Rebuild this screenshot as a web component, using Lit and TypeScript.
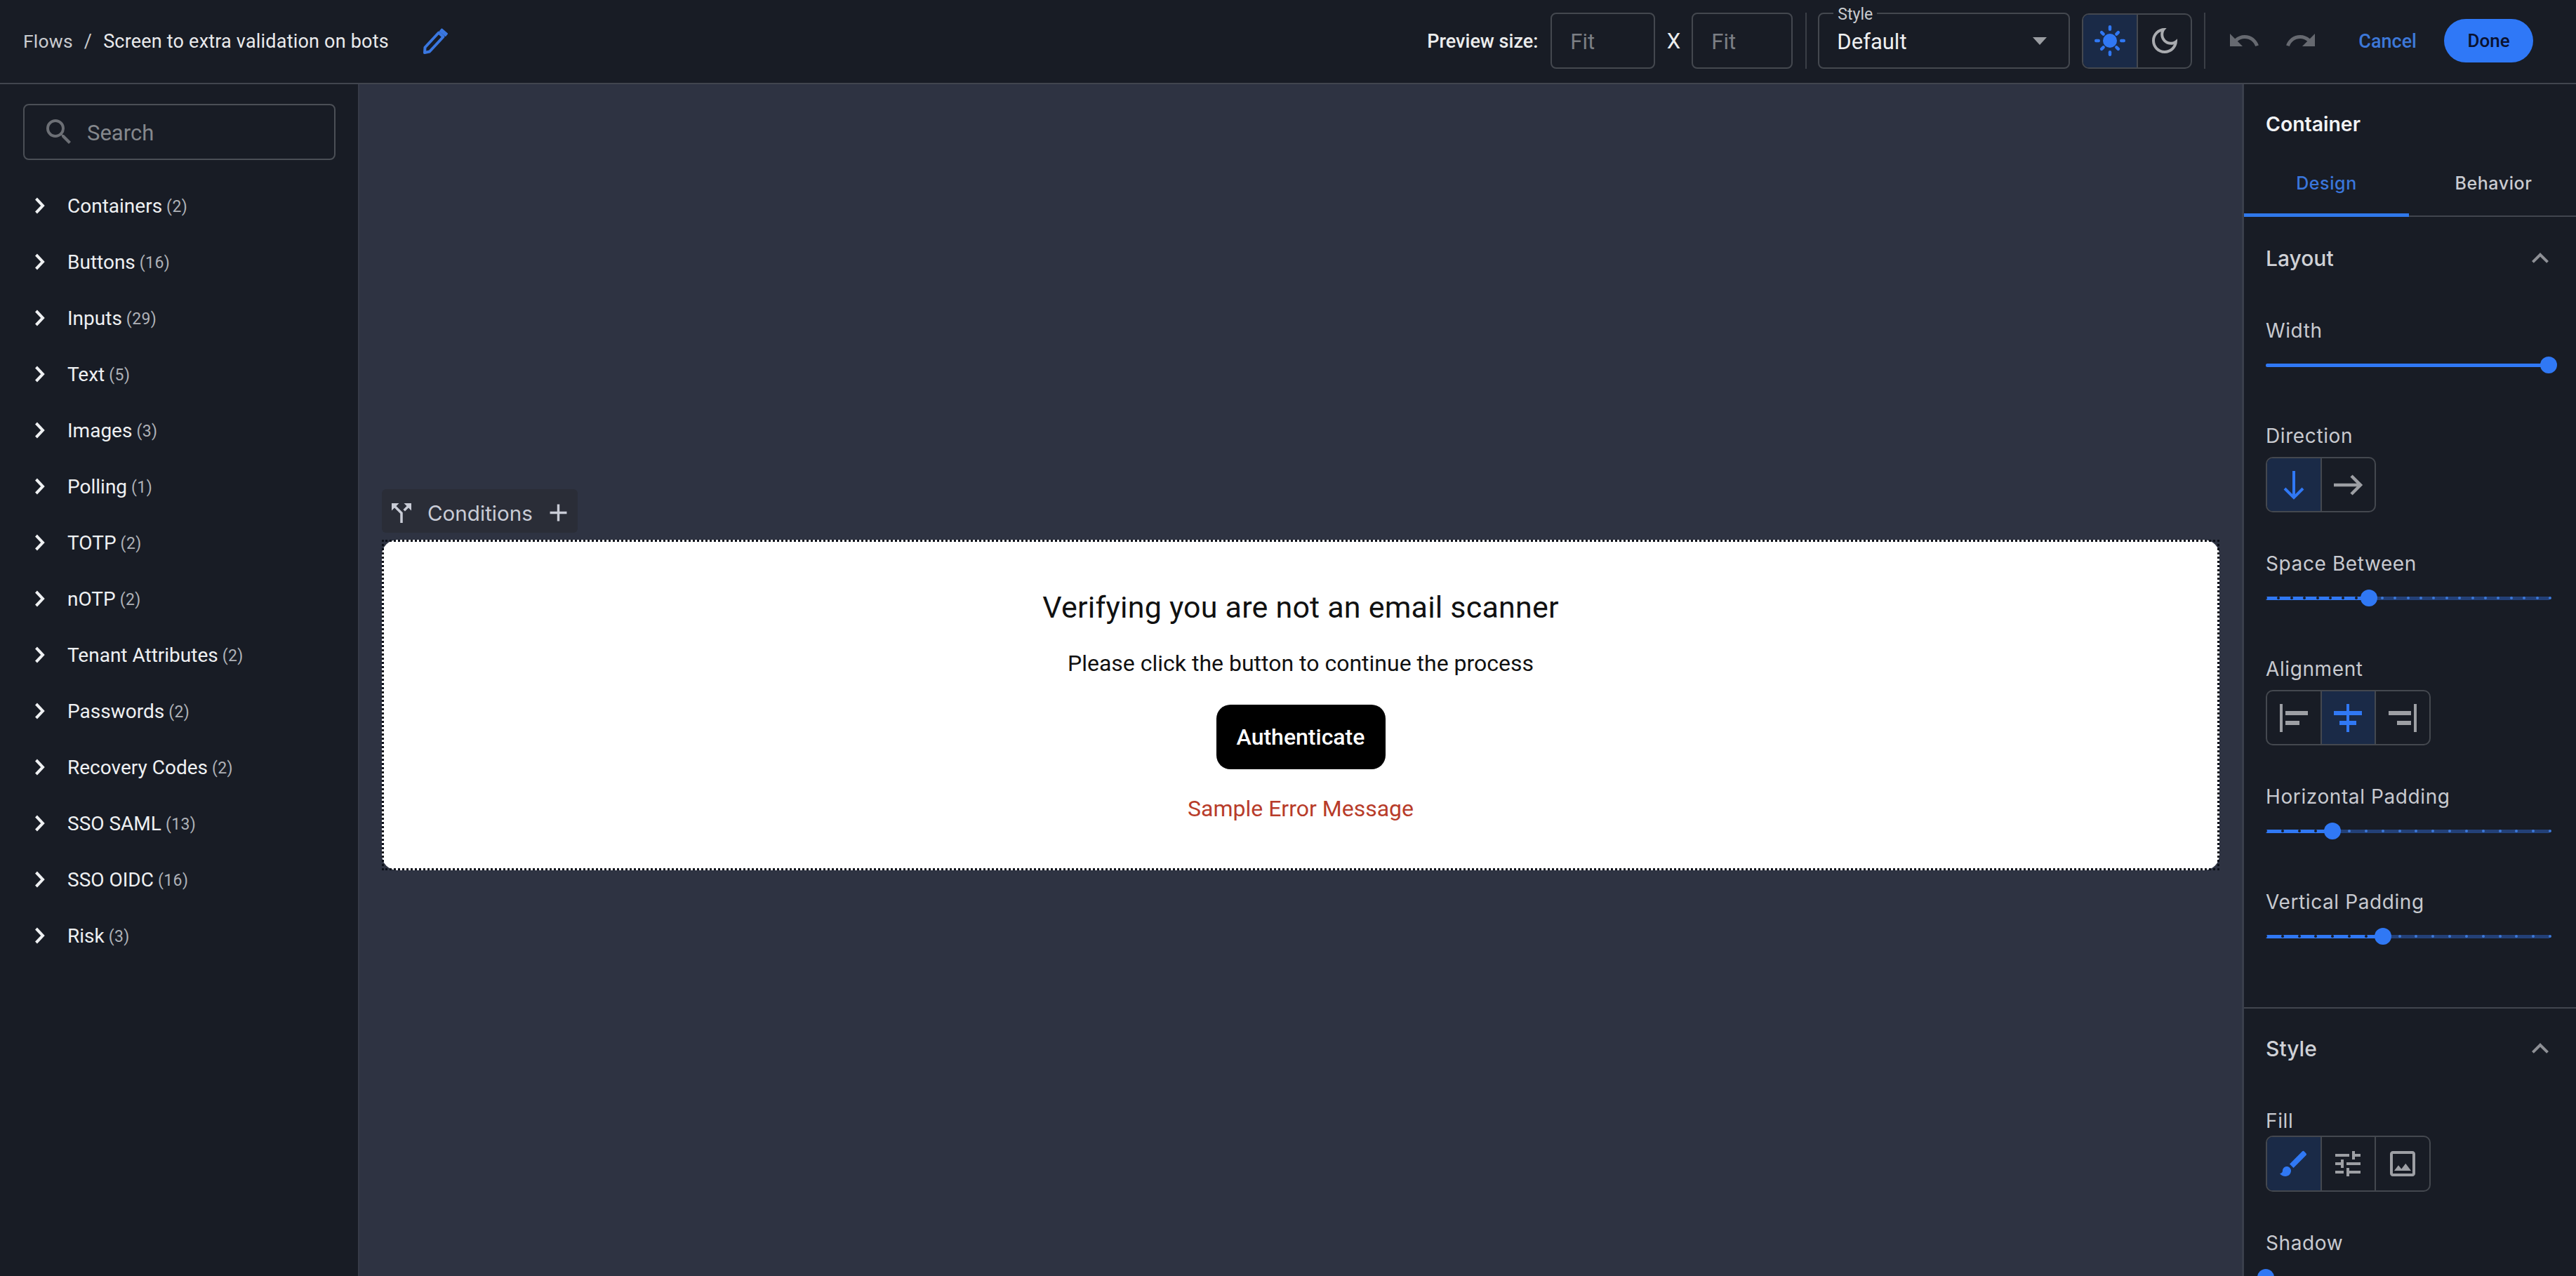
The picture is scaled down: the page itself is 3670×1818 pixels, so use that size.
import { LitElement, html, css, svg } from "lit";
import { customElement } from "lit/decorators.js";

const ICONS: Record<string, string> = {
  search: "M15.5 14h-.79l-.28-.27A6.47 6.47 0 0 0 16 9.5 6.5 6.5 0 1 0 9.5 16c1.61 0 3.09-.59 4.23-1.57l.27.28v.79l5 4.99L20.49 19l-4.99-5zm-6 0C7.01 14 5 11.99 5 9.5S7.01 5 9.5 5 14 7.01 14 9.5 11.99 14 9.5 14z",
  moon: "M9.37 5.51C9.19 6.15 9.1 6.82 9.1 7.5c0 4.08 3.32 7.4 7.4 7.4.68 0 1.35-.09 1.99-.27C17.45 17.19 14.93 19 12 19c-3.86 0-7-3.14-7-7 0-2.93 1.81-5.45 4.37-6.49zM12 3c-4.97 0-9 4.03-9 9s4.03 9 9 9 9-4.03 9-9c0-.46-.04-.92-.1-1.36-.98 1.37-2.58 2.26-4.4 2.26-2.98 0-5.4-2.42-5.4-5.4 0-1.81.89-3.42 2.26-4.4-.44-.06-.9-.1-1.36-.1z",
  undo: "M12.5 8c-2.65 0-5.05.99-6.9 2.6L2 7v9h9l-3.62-3.62c1.39-1.16 3.16-1.88 5.12-1.88 3.54 0 6.55 2.31 7.6 5.5l2.37-.78C21.08 11.03 17.15 8 12.5 8z",
  redo: "M18.4 10.6C16.55 8.99 14.15 8 11.5 8c-4.65 0-8.58 3.03-9.96 7.22L3.9 16c1.05-3.19 4.05-5.5 7.6-5.5 1.95 0 3.73.72 5.12 1.88L13 16h9V7l-3.6 3.6z",
  brush: "M7 14c-1.66 0-3 1.34-3 3 0 1.31-1.16 2-2 2 .92 1.22 2.49 2 4 2 2.21 0 4-1.79 4-4 0-1.66-1.34-3-3-3zm13.71-9.37l-1.34-1.34a.996.996 0 0 0-1.41 0L9 12.25 11.75 15l8.96-8.96a.996.996 0 0 0 0-1.41z",
  tune: "M3 17v2h6v-2H3zM3 5v2h10V5H3zm10 16v-2h8v-2h-8v-2h-2v6h2zM7 9v2H3v2h4v2h2V9H7zm14 4v-2H11v2h10zm-6-4h2V7h4V5h-4V3h-2v6z",
  image: "M19 5v14H5V5h14m0-2H5c-1.1 0-2 .9-2 2v14c0 1.1.9 2 2 2h14c1.1 0 2-.9 2-2V5c0-1.1-.9-2-2-2zm-4.86 8.86l-3 3.87L9 13.14 6 17h12l-3.86-5.14z",
  less: "M12 8l-6 6 1.41 1.41L12 10.83l4.59 4.58L18 14z",
  split: "M14 4l2.29 2.29-2.88 2.88 1.42 1.42 2.88-2.88L20 10V4zm-4 0H4v6l2.29-2.29 4.71 4.7V20h2v-8.41l-5.29-5.3z",
  add: "M19 13h-6v6h-2v-6H5v-2h6V5h2v6h6v2z",
};

const icon = (name: string, cls = "") =>
  html`<svg class="ic ${cls}" viewBox="0 0 24 24" fill="currentColor"><path d="${ICONS[name]}"></path></svg>`;

const sun = html`<svg class="ic48" viewBox="0 0 48 48" fill="currentColor">
  <circle cx="24" cy="24" r="10"></circle>
  ${[0, 45, 90, 135, 180, 225, 270, 315].map(
    (a) => svg`<rect x="21.8" y="${a % 90 === 0 ? 2 : 5}" width="4.4" height="8" rx="2.2" transform="rotate(${a} 24 24)"></rect>`
  )}
</svg>`;

const arrowDown = html`<svg class="ic48" viewBox="0 0 48 48" fill="none" stroke="currentColor" stroke-width="4"><path d="M24 4V42M11 29L24 42L37 29"></path></svg>`;
const arrowRight = html`<svg class="ic48" viewBox="0 0 48 48" fill="none" stroke="currentColor" stroke-width="4.5"><path d="M4 24H42M29 11L42 24L29 37"></path></svg>`;
const alignLeft = html`<svg class="ic48" viewBox="0 0 48 48" fill="currentColor"><path d="M4 4h4v40H4zM12 14h32v6H12zM12 28h20v6H12z"></path></svg>`;
const alignCenter = html`<svg class="ic48" viewBox="0 0 48 48" fill="currentColor"><path d="M22 4h4v10h18v6H26v8h10v6H26v10h-4V34H12v-6h10v-8H4v-6h18z"></path></svg>`;
const alignRight = html`<svg class="ic48" viewBox="0 0 48 48" fill="currentColor"><path d="M40 4h4v40h-4zM4 14h32v6H4zM16 28h20v6H16z"></path></svg>`;

const ITEMS: [string, number][] = [
  ["Containers", 2], ["Buttons", 16], ["Inputs", 29], ["Text", 5], ["Images", 3],
  ["Polling", 1], ["TOTP", 2], ["nOTP", 2], ["Tenant Attributes", 2], ["Passwords", 2],
  ["Recovery Codes", 2], ["SSO SAML", 13], ["SSO OIDC", 16], ["Risk", 3],
];

@customElement("app-root")
export class AppRoot extends LitElement {
  static styles = css`
    :host { display: block; width: 3670px; height: 1818px; overflow: hidden; background: #181c25; font-family: "Inter", sans-serif; }
    * { box-sizing: border-box; }
    .ic { width: 48px; height: 48px; display: block; flex: none; }
    .ic48 { width: 48px; height: 48px; display: block; flex: none; }

    .top { height: 120px; border-bottom: 2px solid #41454e; display: flex; align-items: center; justify-content: space-between; padding: 0 61px 2px 33px; }
    .crumbs { display: flex; align-items: center; font: 400 27px/40px "Roboto", sans-serif; color: #e9eaec; letter-spacing: .2px; }
    .crumbs span { padding-top: 2px; }
    .crumbs .flows { color: #c9cbcf; font-size: 26.5px; }
    .crumbs .sep { margin: 0 16px 0 16px; color: #c9cbcf; }
    .crumbs .pen { width: 40px; height: 40px; margin-left: 47px; color: #3a77e0; display: block; }

    .tools { display: flex; align-items: center; }
    .psize { font: 500 27px/40px "Roboto", sans-serif; color: #eceded; margin-right: 18px; padding-top: 2px; }
    .fit { height: 80px; border: 2px solid #44484f; border-radius: 8px; display: flex; align-items: center; padding: 3px 0 0 26px; font: 400 31px/40px "Roboto", sans-serif; color: #7b7e84; }
    .fit.a { width: 149px; }
    .fit.b { width: 144px; }
    .x { font: 400 31px/40px "Roboto", sans-serif; color: #eceded; margin: 0 15px; width: 22px; text-align: center; padding-top: 2px; }
    .vr { width: 2px; height: 80px; background: #3a3e46; flex: none; }
    .vr.m1 { margin: 0 16px 0 18px; }
    .vr.m2 { margin: 0 31px 0 17px; }
    .select { position: relative; width: 359px; height: 80px; border: 2px solid #44484f; border-radius: 8px; margin-right: 17px; display: flex; align-items: center; justify-content: space-between; padding: 3px 31px 0 25px; font: 400 31px/40px "Roboto", sans-serif; color: #eff0f1; }
    .legend { position: absolute; left: 20px; top: -11px; padding: 0 6px; background: #181c25; font: 400 23px/24px "Roboto", sans-serif; color: #c9cbcf; }
    .caret { width: 0; height: 0; border-left: 10px solid transparent; border-right: 10px solid transparent; border-top: 11px solid #9a9da2; margin-top: -3px; }

    .group { display: inline-flex; border: 2px solid #44484f; border-radius: 10px; overflow: hidden; vertical-align: top; }
    .cell { width: 75.5px; height: 75px; display: flex; align-items: center; justify-content: center; color: #9d9fa4; flex: none; }
    .cell + .cell { width: 77.5px; border-left: 2px solid #44484f; }
    .cell.on { background: #1a2a47; color: #3078f4; }
    .group.big .cell { height: 76px; }
    .group.theme .cell + .cell .ic { color: #a9abaf; }

    .undo { color: #666970; }
    .undo + .undo { margin-left: 33px; }
    .cancel { font: 500 27px/40px "Roboto", sans-serif; color: #3d78d8; margin: 0 39px 0 58px; padding-top: 2px; }
    .done { width: 127px; height: 62px; border-radius: 31px; background: #2f78f7; color: #0a1230; font: 500 26px/62px "Roboto", sans-serif; text-align: center; }

    .body { display: flex; height: 1698px; }
    .side { width: 510px; flex: none; padding: 28px 33px 0; }
    .search { width: 445px; height: 80px; border: 2px solid #4b4f56; border-radius: 8px; display: flex; align-items: center; padding-left: 25px; color: #6c6f75; }
    .search span { font: 400 31px/40px "Roboto", sans-serif; color: #85888d; margin-left: 16px; padding-top: 3px; }
    .list { margin-top: 25px; }
    .row { height: 80px; display: flex; align-items: center; color: #eef0f2; }
    .chev { width: 16px; height: 24px; margin-left: 16px; margin-right: 31px; flex: none; display: block; }
    .row b { font: 400 28px/40px "Roboto", sans-serif; padding-top: 2px; }
    .row i { font: 400 23px/40px "Roboto", sans-serif; color: #aeb1b7; margin-left: 6px; letter-spacing: .4px; padding-top: 3px; }

    .canvas { flex: 1; background: #2e3342; border-left: 2px solid #363a48; padding: 577px 32px 0 32px; min-width: 0; }
    .chip { display: inline-flex; align-items: center; height: 62px; padding: 5px 7px 0; background: #2a2d37; border-radius: 6px; color: #c9ccd6; font: 400 29.6px/40px "Inter", sans-serif; vertical-align: top; }
    .chip .ic.split { width: 42px; height: 42px; margin-right: 16px; }
    .chip .ic.add { width: 41px; height: 41px; margin-left: 16px; }
    .chip-wrap { height: 72px; }
    .card { position: relative; height: 471px; background: #fff; border-radius: 22px; display: flex; flex-direction: column; align-items: center; color: #111; }
    .card::after { content: ""; position: absolute; inset: 0; border: 3px dotted #0c0f18; pointer-events: none; }
    .card h1 { margin: 72px 0 0; font: 400 43px/48px "Roboto", sans-serif; letter-spacing: .2px; }
    .card p { margin: 36px 0 0; font: 400 32px/40px "Roboto", sans-serif; }
    .btn { margin-top: 39px; width: 241px; height: 92px; border-radius: 20px; background: #000; color: #fff; font: 500 32px/92px "Roboto", sans-serif; text-align: center; }
    .err { margin-top: 36px; font: 400 32px/40px "Roboto", sans-serif; color: #b83c2a; }

    .panel { width: 476px; flex: none; border-left: 3px solid #3a3f4c; overflow: hidden; height: 1698px; }
    .ptitle { padding: 37px 0 18px 31px; font: 600 28.4px/40px "Inter", sans-serif; color: #f2f3f5; }
    .tabs { display: flex; height: 94px; border-bottom: 2px solid #41454e; }
    .tab { position: relative; flex: 1; display: flex; align-items: center; justify-content: center; font: 500 25px/40px "Inter", sans-serif; color: #c9cbd0; letter-spacing: .6px; }
    .tab + .tab { padding-left: 3px; }
    .tab.on { color: #3a76dc; }
    .tab.on::after { content: ""; position: absolute; left: 0; right: 0; bottom: -2px; height: 5px; background: #3078ea; }
    .sec { padding: 0 0 18px 31px; border-bottom: 2px solid #41454e; }
    .sec.last { border-bottom: 0; }
    .shead { height: 120px; margin-bottom: 24px; display: flex; align-items: center; justify-content: space-between; padding: 0 27px 2px 0; font: 500 30px/40px "Inter", sans-serif; color: #cfd1d6; }
    .shead .ic { color: #8e9096; }
    .shead.b { height: 116px; margin-bottom: 26px; }
    .label { font: 400 28px/36px "Inter", sans-serif; color: #c8cad0; letter-spacing: .6px; }
    .f-slider { height: 150px; }
    .f-toggle { height: 182px; }
    .f-toggle .group { margin-top: 12px; }
    .f-toggle.tight { height: 174px; }
    .f-toggle.tight .group { margin-top: 3px; }
    .slider { position: relative; width: 405px; height: 36px; margin-top: 13px; }
    .track { position: absolute; left: 0; right: 0; top: 15.5px; height: 5px; border-radius: 3px; background: #234077; }
    .fill { position: absolute; left: 0; top: 15.5px; height: 5px; border-radius: 3px; background: #3078f4; }
    .mark { position: absolute; top: 16px; width: 4px; height: 4px; margin-left: -2px; border-radius: 50%; background: #3c78d8; }
    .mark.in { background: #181c25; }
    .thumb { position: absolute; top: 6px; width: 24px; height: 24px; margin-left: -12px; border-radius: 50%; background: #3078f4; }
  `;

  private slider(value: number, steps: number) {
    const marks = [];
    for (let i = 0; i <= steps; i++) {
      if (steps) marks.push(html`<span class="mark ${i / steps < value ? "in" : ""}" style="left:${(i / steps) * 100}%"></span>`);
    }
    return html`<div class="slider">
      <div class="track"></div>
      <div class="fill" style="width:${value * 100}%"></div>
      ${marks}
      <div class="thumb" style="left:${value * 100}%"></div>
    </div>`;
  }

  private sfield(name: string, value: number, steps: number) {
    return html`<div class="f-slider"><div class="label">${name}</div>${this.slider(value, steps)}</div>`;
  }

  render() {
    return html`
      <div class="top">
        <div class="crumbs">
          <span class="flows">Flows</span><span class="sep">/</span><span>Screen to extra validation on bots</span>
          <svg class="pen" viewBox="0 0 40 40" fill="none" stroke="currentColor" stroke-width="4" stroke-linejoin="round">
            <path d="M4.5 29.5L24 8.5L30.5 14.5L11 35.5L4 37z"></path>
            <path d="M28.5 3.5L36 10L33.5 13L26 6.5z" fill="currentColor" stroke-width="2"></path>
          </svg>
        </div>
        <div class="tools">
          <div class="psize">Preview size:</div>
          <div class="fit a">Fit</div>
          <div class="x">X</div>
          <div class="fit b">Fit</div>
          <div class="vr m1"></div>
          <div class="select"><span class="legend">Style</span><span>Default</span><span class="caret"></span></div>
          <div class="group theme">
            <div class="cell on">${sun}</div>
            <div class="cell">${icon("moon")}</div>
          </div>
          <div class="vr m2"></div>
          <div class="undo">${icon("undo")}</div>
          <div class="undo">${icon("redo")}</div>
          <div class="cancel">Cancel</div>
          <div class="done">Done</div>
        </div>
      </div>
      <div class="body">
        <div class="side">
          <div class="search">${icon("search")}<span>Search</span></div>
          <div class="list">
            ${ITEMS.map(
              ([n, c]) => html`<div class="row">
                <svg class="chev" viewBox="0 0 16 24" fill="none" stroke="currentColor" stroke-width="4"><path d="M2.5 2L12 12L2.5 22"></path></svg>
                <b>${n}</b><i>(${c})</i>
              </div>`
            )}
          </div>
        </div>
        <div class="canvas">
          <div class="chip-wrap">
            <div class="chip">${icon("split", "split")}<span>Conditions</span>${icon("add", "add")}</div>
          </div>
          <div class="card">
            <h1>Verifying you are not an email scanner</h1>
            <p>Please click the button to continue the process</p>
            <div class="btn">Authenticate</div>
            <div class="err">Sample Error Message</div>
          </div>
        </div>
        <div class="panel">
          <div class="ptitle">Container</div>
          <div class="tabs"><div class="tab on">Design</div><div class="tab">Behavior</div></div>
          <div class="sec">
            <div class="shead">Layout${icon("less")}</div>
            ${this.sfield("Width", 0.995, 0)}
            <div class="f-toggle"><div class="label">Direction</div>
              <div class="group"><div class="cell on">${arrowDown}</div><div class="cell">${arrowRight}</div></div>
            </div>
            ${this.sfield("Space Between", 8 / 22, 22)}
            <div class="f-toggle"><div class="label">Alignment</div>
              <div class="group"><div class="cell">${alignLeft}</div><div class="cell on">${alignCenter}</div><div class="cell">${alignRight}</div></div>
            </div>
            ${this.sfield("Horizontal Padding", 4 / 17, 17)}
            ${this.sfield("Vertical Padding", 7 / 17, 17)}
          </div>
          <div class="sec last">
            <div class="shead b">Style${icon("less")}</div>
            <div class="f-toggle tight"><div class="label">Fill</div>
              <div class="group big"><div class="cell on">${icon("brush")}</div><div class="cell">${icon("tune")}</div><div class="cell">${icon("image")}</div></div>
            </div>
            ${this.sfield("Shadow", 0, 0)}
          </div>
        </div>
      </div>
    `;
  }
}
